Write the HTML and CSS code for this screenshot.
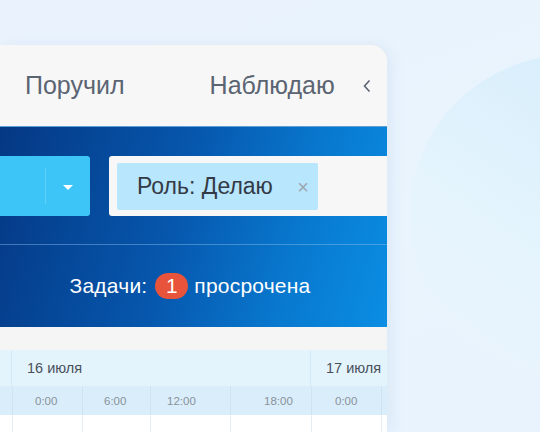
FILE: index.html
```html
<!DOCTYPE html>
<html lang="ru">
<head>
<meta charset="utf-8">
<link rel="stylesheet" href="styles.css">
</head>
<body>
<div class="bg-blob"></div>
<div class="card">
  <div class="tabs">
    <span class="tab">Поручил</span>
    <span class="tab tab-watch">Наблюдаю</span>
    <svg class="chev" width="10" height="16" viewBox="0 0 10 16"><path d="M7.5 2.5 L2.5 8 L7.5 13.5" fill="none" stroke="#5b6472" stroke-width="1.6"/></svg>
  </div>
  <div class="band">
    <div class="filters">
      <div class="btn">
        <span class="btn-sep"></span>
        <span class="caret"></span>
      </div>
      <div class="input">
        <div class="tag"><span class="tag-text">Роль: Делаю</span><span class="tag-x">×</span></div>
      </div>
    </div>
    <div class="summary">
      <span>Задачи:</span><span class="badge">1</span><span>просрочена</span>
    </div>
  </div>
  <div class="strip"></div>
  <div class="timeline">
    <div class="days">
      <div class="c c0"></div>
      <div class="day d1">16 июля</div>
      <div class="day d2">17 июля</div>
    </div>
    <div class="hours">
      <div class="c c0"></div>
      <div class="c c1"><span class="h1">0:00</span></div>
      <div class="c c2"><span class="h2">6:00</span></div>
      <div class="c c3"><span class="h3">12:00</span></div>
      <div class="c c4"><span class="h4">18:00</span></div>
      <div class="c c5"><span class="h5">0:00</span></div>
      <div class="c c6"></div>
    </div>
    <div class="rows">
      <div class="c c0"></div>
      <div class="c c1"></div>
      <div class="c c2"></div>
      <div class="c c3"></div>
      <div class="c c4"></div>
      <div class="c c5"></div>
      <div class="c c6"></div>
    </div>
  </div>
</div>
</body>
</html>
```
FILE: styles.css
```css
html, body {
  margin: 0;
  padding: 0;
}
body {
  width: 540px;
  height: 432px;
  overflow: hidden;
  position: relative;
  background: linear-gradient(160deg, #eaf3fd 0%, #e9f4fd 60%, #e8f3fd 100%);
  font-family: "Liberation Sans", Arial, sans-serif;
}
.bg-blob {
  position: absolute;
  left: 410px;
  top: 55px;
  width: 320px;
  height: 320px;
  border-radius: 50%;
  background: linear-gradient(215deg, #d4ebfb 0%, #dcf0fc 35%, #e4f4fd 60%, #e9f4fd 85%);
}
.card {
  position: relative;
  margin-top: 45px;
  width: 387px;
  height: 387px;
  background: #f7f7f7;
  border-radius: 0 16px 0 0;
  overflow: hidden;
  box-shadow: 4px 0 14px rgba(120, 160, 200, 0.12);
}
.tabs {
  height: 81px;
  display: flex;
  align-items: center;
  padding-left: 25px;
  color: #5b6472;
  font-size: 25px;
}
.tab-watch {
  margin-left: 85px;
}
.chev {
  margin-left: 27px;
  margin-top: 1px;
}
.band {
  height: 200px;
  border-top: 1px solid #5d9fd6;
  background: linear-gradient(105deg, #053884 0%, #0657ad 45%, #0879cf 75%, #0a8ee3 100%);
}
.filters {
  display: flex;
  gap: 19px;
  padding-top: 29px;
  height: 60px;
  padding-bottom: 28px;
  border-bottom: 1px solid rgba(140, 190, 235, 0.45);
}
.btn {
  width: 90px;
  height: 60px;
  background: #3dc5f8;
  border-radius: 0 3px 3px 0;
  display: flex;
  align-items: center;
}
.btn-sep {
  width: 1px;
  height: 36px;
  margin-left: 45px;
  background: #5fd0f7;
}
.caret {
  width: 0;
  height: 0;
  margin-left: 17px;
  margin-top: 2px;
  border-left: 5px solid transparent;
  border-right: 5px solid transparent;
  border-top: 5px solid #ffffff;
}
.input {
  flex: 1;
  height: 60px;
  background: #f7f7f7;
  border-radius: 3px 0 0 3px;
  padding: 7px 0 0 8px;
  box-sizing: border-box;
}
.tag {
  width: 201px;
  height: 47px;
  background: #b7e6fd;
  border-radius: 2px;
  display: flex;
  align-items: center;
  box-sizing: border-box;
  padding-left: 20px;
}
.tag-text {
  font-size: 23px;
  color: #343a45;
}
.tag-x {
  margin-left: auto;
  margin-right: 9px;
  font-size: 20px;
  color: #9ea6b0;
  margin-top: 1px;
}
.summary {
  height: 82px;
  display: flex;
  align-items: center;
  justify-content: center;
  padding-right: 7px;
  color: #ffffff;
  font-size: 21px;
  letter-spacing: 0.2px;
}
.badge {
  width: 33px;
  height: 26px;
  border-radius: 13px;
  background: #e8533b;
  display: flex;
  align-items: center;
  justify-content: center;
  margin: 0 6px 0 8px;
  font-size: 21px;
}
.strip {
  height: 23px;
  background: #f5f5f5;
}
.timeline {
  background: #ffffff;
}
.days {
  height: 36px;
  display: flex;
  background: #e3f4fd;
  color: #4a505a;
  font-size: 14.5px;
}
.days .c0 {
  width: 12px;
  border-right: 1px solid #d3e9f5;
  box-sizing: border-box;
}
.day {
  display: flex;
  align-items: center;
  padding-left: 15px;
  box-sizing: border-box;
}
.d1 {
  width: 299px;
  border-right: 1px solid #d3e9f5;
}
.d2 {
  width: 76px;
}
.hours {
  height: 29px;
  display: flex;
  background: #d9eefa;
  color: #8a919b;
  font-size: 11.5px;
}
.rows {
  height: 17px;
  display: flex;
}
.c {
  box-sizing: border-box;
  border-right: 1px solid #e3edf3;
  display: flex;
  align-items: center;
}
.hours .c {
  border-right-color: #cfe4f1;
}
.c0 { width: 13px; }
.c1 { width: 70px; }
.c2 { width: 68px; }
.c3 { width: 80px; }
.c4 { width: 81px; }
.c5 { width: 70px; }
.c6 { width: 5px; border-right: none; }
.h1 { margin-left: 22px; }
.h2 { margin-left: 21px; }
.h3 { margin-left: 16px; }
.h4 { margin-left: 33px; }
.h5 { margin-left: 23px; }
```
